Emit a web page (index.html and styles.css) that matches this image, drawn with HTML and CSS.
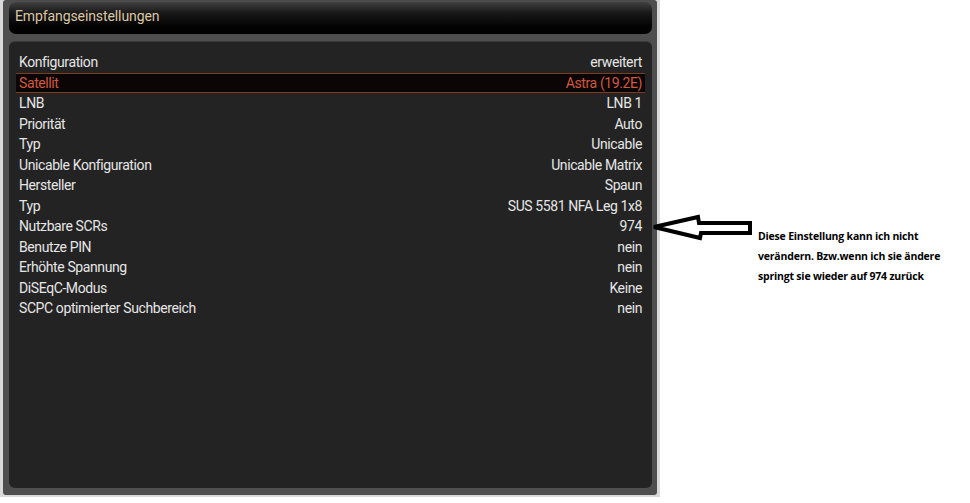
FILE: index.html
```html
<!DOCTYPE html>
<html lang="de">
<head>
<meta charset="utf-8">
<title>Empfangseinstellungen</title>
<link rel="stylesheet" href="styles.css">
</head>
<body>
<div class="page">
  <div class="screen">
    <div class="plate">
      <div class="title">Empfangseinstellungen</div>
      <div class="content">
        <ul class="list">
          <li class="row"><span>Konfiguration</span><span>erweitert</span></li>
          <li class="row selected"><span>Satellit</span><span>Astra (19.2E)</span></li>
          <li class="row"><span>LNB</span><span>LNB 1</span></li>
          <li class="row"><span>Priorität</span><span>Auto</span></li>
          <li class="row"><span>Typ</span><span>Unicable</span></li>
          <li class="row"><span>Unicable Konfiguration</span><span>Unicable Matrix</span></li>
          <li class="row"><span>Hersteller</span><span>Spaun</span></li>
          <li class="row"><span>Typ</span><span>SUS 5581 NFA Leg 1x8</span></li>
          <li class="row"><span>Nutzbare SCRs</span><span>974</span></li>
          <li class="row"><span>Benutze PIN</span><span>nein</span></li>
          <li class="row"><span>Erhöhte Spannung</span><span>nein</span></li>
          <li class="row"><span>DiSEqC-Modus</span><span>Keine</span></li>
          <li class="row"><span>SCPC optimierter Suchbereich</span><span>nein</span></li>
        </ul>
      </div>
    </div>
  </div>
  <div class="note">
    <p>Diese Einstellung kann ich nicht</p>
    <p>verändern. Bzw.wenn ich sie ändere</p>
    <p>springt sie wieder auf 974 zurück</p>
  </div>
  <svg class="arrow" width="106" height="30" viewBox="0 0 106 30" aria-hidden="true">
    <polygon points="4,13 48,3 49,9 100,9 100,19 51,19 50,24" fill="#fff" stroke="#000" stroke-width="4" stroke-linejoin="miter"/>
  </svg>
</div>
</body>
</html>
```

FILE: styles.css
```css
html, body {
  margin: 0;
  padding: 0;
  background: #ffffff;
}

.page {
  position: relative;
  display: flex;
  width: 970px;
  height: 503px;
  overflow: hidden;
}

.screen {
  width: 660px;
  height: 497px;
  box-sizing: border-box;
  padding: 0 3px 2px 3px;
  background: #d9d9d9;
  flex: none;
}

.plate {
  height: 100%;
  box-sizing: border-box;
  padding: 2px 5px 7px 6px;
  background: #4e4e4e;
  border-radius: 3px;
  display: flex;
  flex-direction: column;
  gap: 7px;
}

.title {
  height: 32px;
  flex: none;
  box-sizing: border-box;
  padding: 5px 0 0 6px;
  border-radius: 7px;
  background: linear-gradient(#404040 0%, #181818 35%, #040404 75%, #000 100%);
  color: #dcc6a6;
  font-family: Roboto, "Noto Sans", sans-serif;
  font-size: 14px;
  letter-spacing: -0.1px;
  line-height: 18px;
}

.content {
  flex: 1;
  background: #232323;
  border-radius: 6px;
  border-top: 1px solid #3a3a3a;
  padding: 10px 7px 0 7px;
}

.list {
  list-style: none;
  margin: 0;
  padding: 0;
}

.row {
  display: flex;
  justify-content: space-between;
  align-items: center;
  height: 20.5px;
  padding: 0 3px;
  color: #e6e6e6;
  font-family: Roboto, "Noto Sans", sans-serif;
  font-size: 14px;
  letter-spacing: -0.4px;
}

.row.selected {
  background: #0b0605;
  color: #d2583e;
  box-shadow: inset 0 1px 0 #7c3d22, inset 0 -1px 0 #7c3d22;
}

.note {
  margin-left: 98px;
  padding-top: 226px;
  font-family: "Open Sans", "Liberation Sans", sans-serif;
  font-weight: 700;
  font-size: 10.5px;
  letter-spacing: -0.2px;
  color: #000;
}

.note p {
  margin: 0;
  line-height: 20px;
  white-space: nowrap;
}

.arrow {
  position: absolute;
  left: 650px;
  top: 214px;
}
```
